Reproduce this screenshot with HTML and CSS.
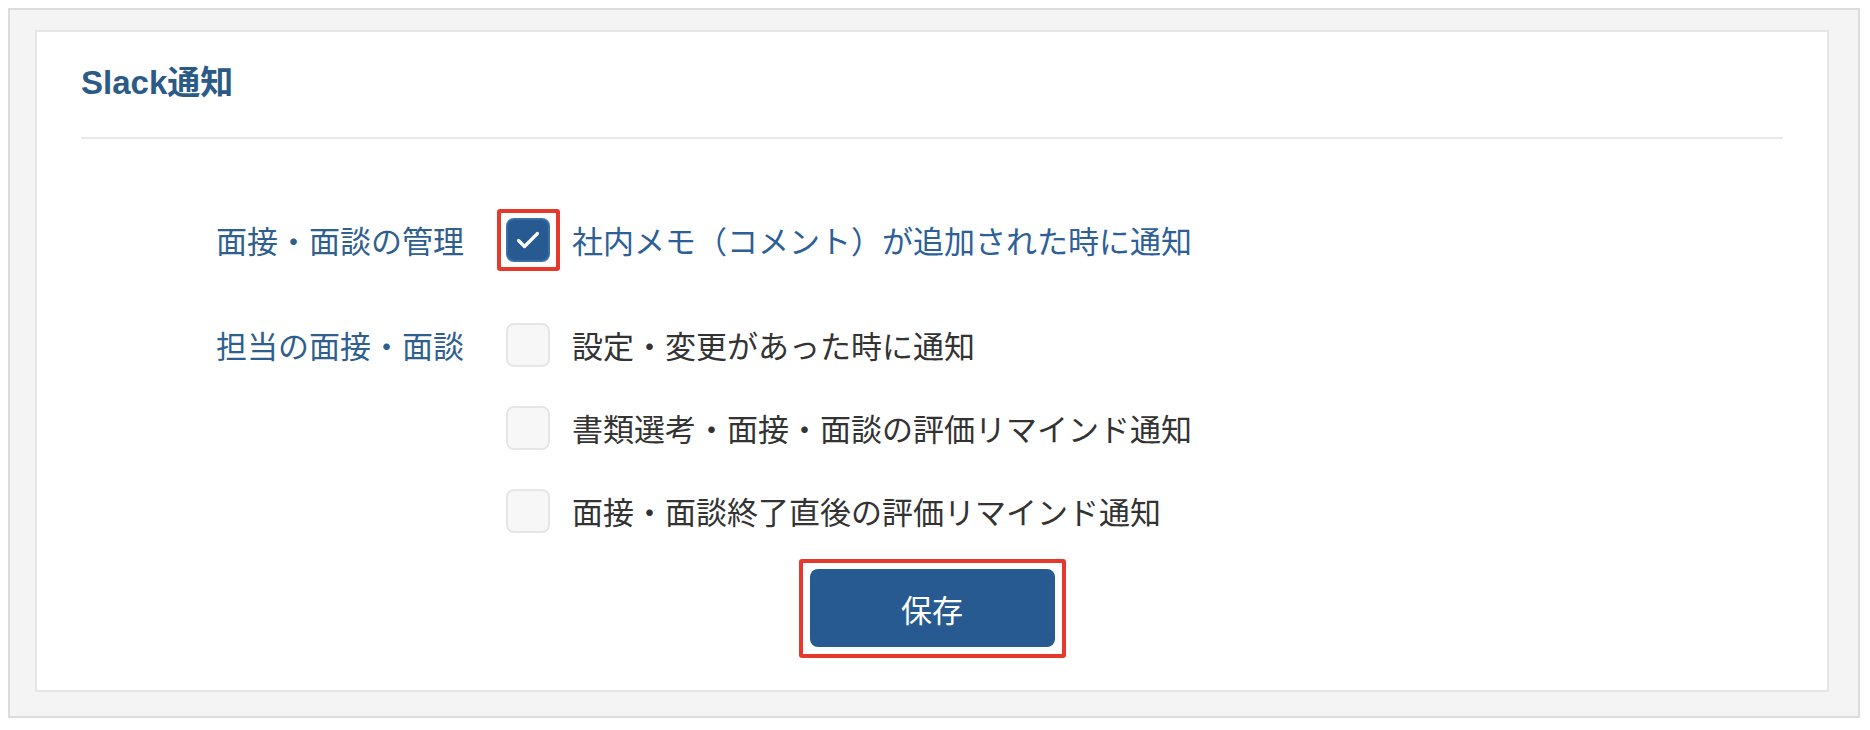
FILE: index.html
```html
<!DOCTYPE html>
<html lang="ja">
<head>
    <meta charset="UTF-8">
    <meta name="viewport" content="width=device-width, initial-scale=1.0">
    <title>Slack通知</title>
    <link rel="stylesheet" href="styles.css">
</head>
<body>
    <div class="frame">
        <section class="card">
            <h2 class="card-title">Slack通知</h2>

            <form class="settings">
                <div class="setting-row">
                    <div class="setting-label">面接・面談の管理</div>
                    <div class="setting-options">
                        <label class="option is-checked">
                            <span class="checkbox marked">
                                <svg width="44" height="44" viewBox="0 0 44 44">
                                    <path d="M12.5 22.5 L18.5 28.5 L31.5 15.5" fill="none" stroke="#fff" stroke-width="3.2" stroke-linecap="round" stroke-linejoin="round"/>
                                </svg>
                            </span>
                            <span class="option-text">社内メモ（コメント）が追加された時に通知</span>
                        </label>
                    </div>
                </div>

                <div class="setting-row">
                    <div class="setting-label">担当の面接・面談</div>
                    <div class="setting-options">
                        <label class="option">
                            <span class="checkbox"></span>
                            <span class="option-text">設定・変更があった時に通知</span>
                        </label>
                        <label class="option">
                            <span class="checkbox"></span>
                            <span class="option-text">書類選考・面接・面談の評価リマインド通知</span>
                        </label>
                        <label class="option">
                            <span class="checkbox"></span>
                            <span class="option-text">面接・面談終了直後の評価リマインド通知</span>
                        </label>
                    </div>
                </div>

                <div class="actions">
                    <button type="button" class="save-button marked">保存</button>
                </div>
            </form>
        </section>
    </div>
</body>
</html>
```

FILE: styles.css
```css
body {
    font-family: "Noto Sans CJK JP", sans-serif;
    margin: 8px 10px 12px 8px;
    padding: 0;
    background-color: #fff;
}

.frame {
    border: 2px solid #dcdcdc;
    background-color: #f4f4f4;
    padding: 20px 29px 24px 25px;
}

.card {
    border: 2px solid #e6e6e6;
    background-color: #fff;
    padding: 32px 44px 43px 44px;
}

.card-title {
    margin: 0;
    padding-bottom: 35px;
    border-bottom: 2px solid #e8e8e8;
    font-family: "Liberation Sans", "Noto Sans CJK JP", sans-serif;
    font-size: 33px;
    font-weight: bold;
    line-height: 38px;
    height: 38px;
    color: #2b5a87;
}

.settings {
    display: flex;
    flex-direction: column;
    margin: 79px 0 0 0;
}

.setting-row {
    display: grid;
    grid-template-columns: 383px 1fr;
    column-gap: 42px;
}

.setting-row + .setting-row {
    margin-top: 61px;
}

.setting-label {
    text-align: right;
    font-size: 31px;
    line-height: 44px;
    color: #2f5f8e;
}

.setting-options {
    display: flex;
    flex-direction: column;
    gap: 39px;
}

.option {
    display: flex;
    align-items: center;
    gap: 22px;
    height: 44px;
    cursor: pointer;
}

.checkbox {
    position: relative;
    display: block;
    width: 44px;
    height: 44px;
    box-sizing: border-box;
    border: 2px solid #e6e6e6;
    border-radius: 8px;
    background-color: #f7f7f7;
}

.option-text {
    font-size: 31px;
    line-height: 44px;
    color: #333;
}

.is-checked .checkbox {
    border-color: #3a6ea6;
    background-color: #265a90;
}

.is-checked .checkbox svg {
    position: absolute;
    top: -2px;
    left: -2px;
}

.is-checked .option-text {
    color: #2d6098;
}

.actions {
    display: flex;
    justify-content: center;
    margin-top: 36px;
}

.save-button {
    position: relative;
    width: 245px;
    height: 78px;
    border: none;
    border-radius: 8px;
    background-color: #265a91;
    color: #fff;
    font-family: "Noto Sans CJK JP", sans-serif;
    font-size: 31px;
    cursor: pointer;
}

/* red highlight boxes from the screenshot */
.marked::after {
    content: "";
    position: absolute;
    top: -11px;
    left: -11px;
    right: -11px;
    bottom: -11px;
    border: 4px solid #e6392b;
    border-radius: 3px;
    pointer-events: none;
}

.checkbox.marked::after {
    top: -11px;
    left: -11px;
    right: -12px;
    bottom: -11px;
}

.save-button.marked::after {
    top: -10px;
    bottom: -11px;
}
```
